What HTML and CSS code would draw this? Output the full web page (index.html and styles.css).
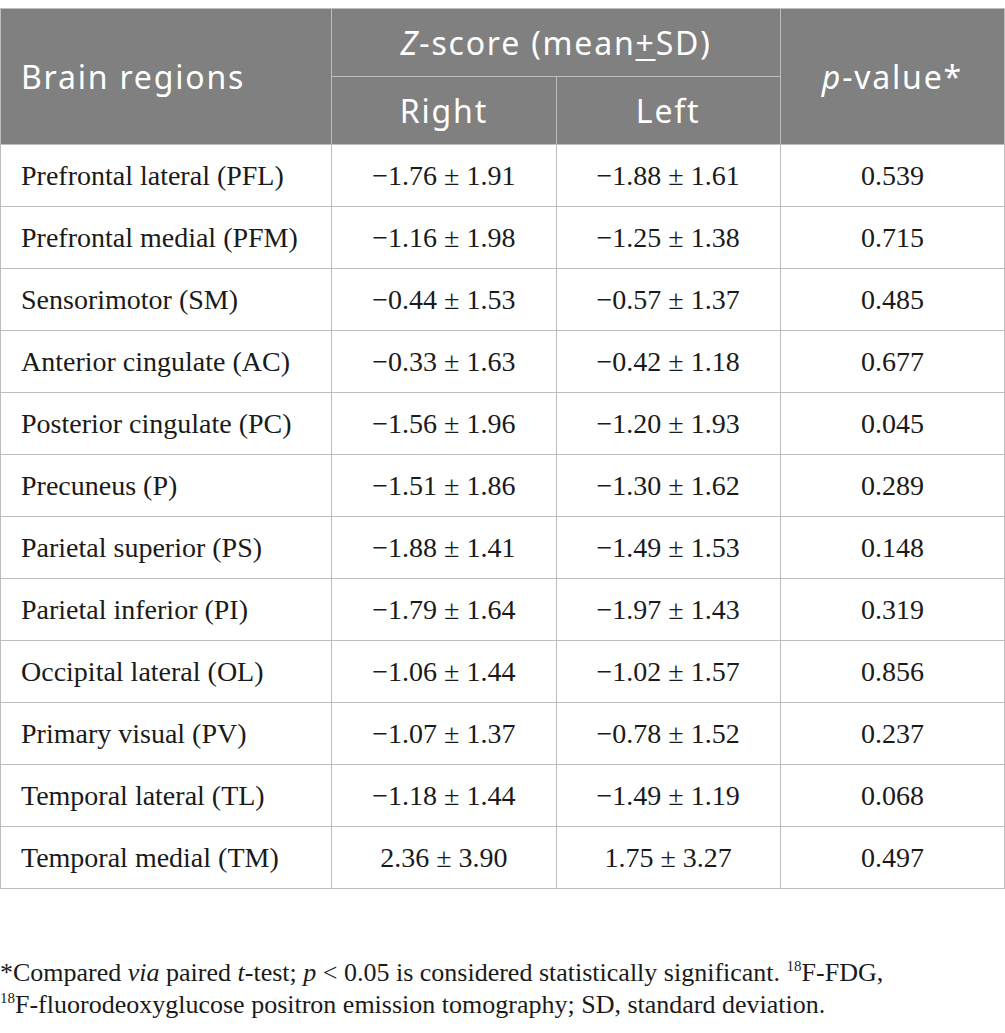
FILE: index.html
```html
<!DOCTYPE html>
<html lang="en">
<head>
  <meta charset="UTF-8">
  <title>Brain regions Z-score</title>
  <link rel="stylesheet" href="styles.css">
</head>
<body>
  <table class="data">
    <colgroup>
      <col class="c-region">
      <col class="c-val">
      <col class="c-val">
      <col class="c-val">
    </colgroup>
    <thead>
      <tr>
        <th rowspan="2" class="left">Brain regions</th>
        <th colspan="2"><i>Z</i>-score (mean<u>+</u>SD)</th>
        <th rowspan="2"><i>p</i>-value*</th>
      </tr>
      <tr>
        <th>Right</th>
        <th>Left</th>
      </tr>
    </thead>
    <tbody>
      <tr><td class="left">Prefrontal lateral (PFL)</td><td>−1.76 ± 1.91</td><td>−1.88 ± 1.61</td><td>0.539</td></tr>
      <tr><td class="left">Prefrontal medial (PFM)</td><td>−1.16 ± 1.98</td><td>−1.25 ± 1.38</td><td>0.715</td></tr>
      <tr><td class="left">Sensorimotor (SM)</td><td>−0.44 ± 1.53</td><td>−0.57 ± 1.37</td><td>0.485</td></tr>
      <tr><td class="left">Anterior cingulate (AC)</td><td>−0.33 ± 1.63</td><td>−0.42 ± 1.18</td><td>0.677</td></tr>
      <tr><td class="left">Posterior cingulate (PC)</td><td>−1.56 ± 1.96</td><td>−1.20 ± 1.93</td><td>0.045</td></tr>
      <tr><td class="left">Precuneus (P)</td><td>−1.51 ± 1.86</td><td>−1.30 ± 1.62</td><td>0.289</td></tr>
      <tr><td class="left">Parietal superior (PS)</td><td>−1.88 ± 1.41</td><td>−1.49 ± 1.53</td><td>0.148</td></tr>
      <tr><td class="left">Parietal inferior (PI)</td><td>−1.79 ± 1.64</td><td>−1.97 ± 1.43</td><td>0.319</td></tr>
      <tr><td class="left">Occipital lateral (OL)</td><td>−1.06 ± 1.44</td><td>−1.02 ± 1.57</td><td>0.856</td></tr>
      <tr><td class="left">Primary visual (PV)</td><td>−1.07 ± 1.37</td><td>−0.78 ± 1.52</td><td>0.237</td></tr>
      <tr><td class="left">Temporal lateral (TL)</td><td>−1.18 ± 1.44</td><td>−1.49 ± 1.19</td><td>0.068</td></tr>
      <tr><td class="left">Temporal medial (TM)</td><td>2.36 ± 3.90</td><td>1.75 ± 3.27</td><td>0.497</td></tr>
    </tbody>
  </table>

  <p class="note">*Compared <i>via</i> paired <i>t</i>-test; <i>p</i> &lt; 0.05 is considered statistically significant. <sup>18</sup>F-FDG, <span class="nb"><sup>18</sup>F-fluorodeoxyglucose</span> positron emission tomography; SD, standard deviation.</p>
</body>
</html>
```

FILE: styles.css
```css
body {
  margin: 8px 0 0 0;
  background: #fff;
  color: #1a1a1a;
  font-family: "Liberation Serif", "Times New Roman", serif;
}
.data {
  width: 1005px;
  border-collapse: collapse;
  table-layout: fixed;
}
.c-region {
  width: 331px;
}
.c-val {
  width: 224px;
}
.data th,
.data td {
  border: 1px solid #bdbdbd;
  text-align: center;
  vertical-align: middle;
}
.data th {
  background: #808080;
  color: #fff;
  font-family: "Noto Sans", "Lato", sans-serif;
  font-weight: normal;
  font-size: 32px;
  letter-spacing: 1.8px;
  height: 67px;
  padding: 0 20px;
  white-space: nowrap;
}
.data th u {
  text-decoration-thickness: 2px;
  text-underline-offset: 4px;
}
.data td {
  font-size: 28px;
  height: 61px;
  padding: 0 20px;
}
.data .left {
  text-align: left;
}
.note {
  margin: 68px 0 0 0;
  font-size: 26px;
  line-height: 32px;
  padding-right: 60px;
}
.note .nb {
  white-space: nowrap;
}
.note sup {
  font-size: 15px;
  vertical-align: 10px;
  line-height: 0;
}
```
